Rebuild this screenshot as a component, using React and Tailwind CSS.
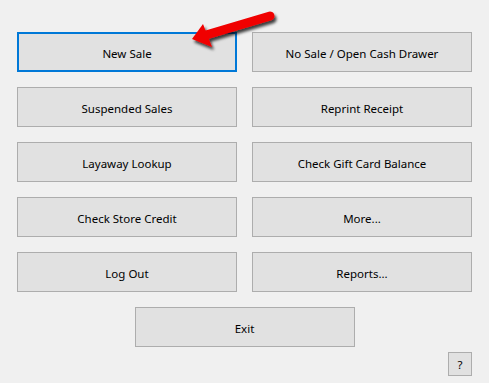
import React from 'react';

const buttons = [
  ['New Sale', 'No Sale / Open Cash Drawer'],
  ['Suspended Sales', 'Reprint Receipt'],
  ['Layaway Lookup', 'Check Gift Card Balance'],
  ['Check Store Credit', 'More...'],
  ['Log Out', 'Reports...'],
];

const font = { fontFamily: '"Noto Sans", "Open Sans", sans-serif' };

const MenuButton = ({ label, focused }) => (
  <button
    className={
      focused
        ? 'h-[40px] w-[220px] pt-[3px] border-2 border-[#0078d7] bg-[#e1e1e1] text-[11.5px] text-black'
        : 'h-[40px] w-[220px] pt-[3px] border border-[#adadad] bg-[#e1e1e1] text-[11.5px] text-black'
    }
  >
    {label}
  </button>
);

const Arrow = () => (
  <svg
    className="absolute left-0 top-0 pointer-events-none"
    width="489"
    height="80"
    viewBox="0 0 489 80"
  >
    <defs>
      <filter id="shadow" x="-20%" y="-50%" width="140%" height="200%">
        <feDropShadow dx="2" dy="3" stdDeviation="1.6" floodColor="#000" floodOpacity="0.75" />
      </filter>
    </defs>
    <g filter="url(#shadow)">
      <line x1="270" y1="16" x2="206" y2="35" stroke="#f00000" strokeWidth="9" strokeLinecap="round" />
      <polygon points="192,39 203,24 212,47" fill="#f00000" />
    </g>
  </svg>
);

export default function App() {
  return (
    <div className="relative w-[489px] h-[383px] bg-[#f0f0f0] overflow-hidden" style={font}>
      <div className="flex flex-col items-center pt-[32px]">
        <div className="grid grid-cols-[220px_220px] gap-x-[15px] gap-y-[15px]">
          {buttons.map(([a, b], i) => (
            <React.Fragment key={a}>
              <MenuButton label={a} focused={i === 0} />
              <MenuButton label={b} />
            </React.Fragment>
          ))}
        </div>
        <div className="mt-[15px]">
          <MenuButton label="Exit" />
        </div>
        <div className="mt-[5px] w-[455px] flex justify-end">
          <button className="h-[24px] w-[24px] pt-[2px] border border-[#adadad] bg-[#e1e1e1] text-[11.5px] text-black">
            ?
          </button>
        </div>
      </div>
      <Arrow />
    </div>
  );
}
